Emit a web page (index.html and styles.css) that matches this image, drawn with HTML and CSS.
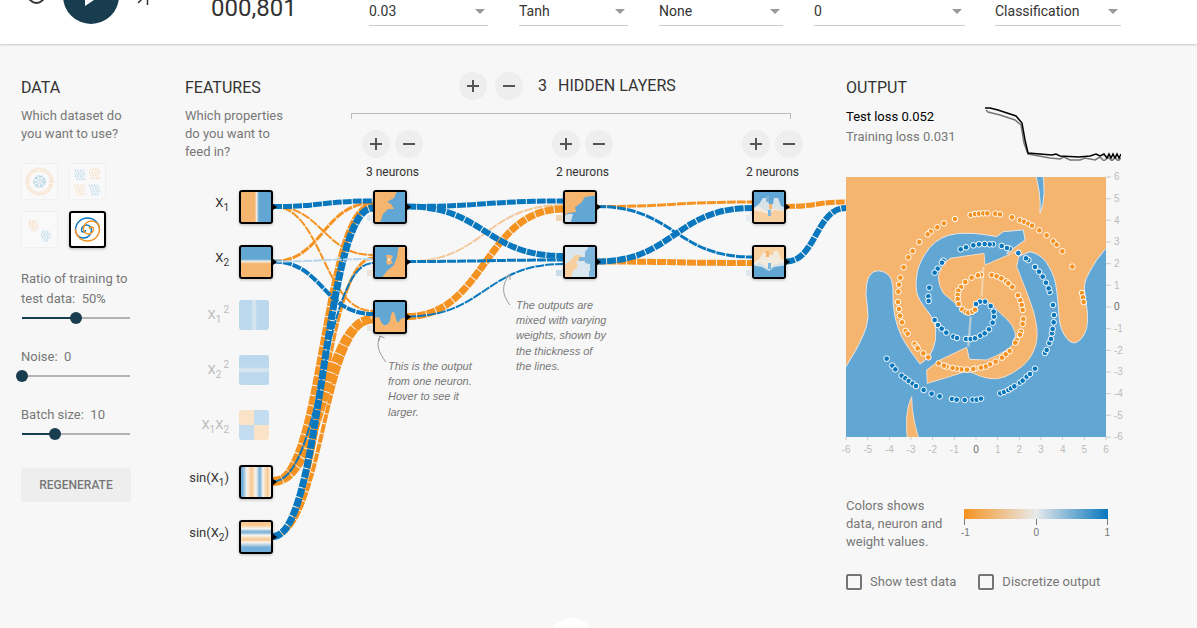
FILE: index.html
```html
<!DOCTYPE html>
<html lang="en">
<head>
<meta charset="utf-8">
<title>Neural network playground</title>
<link rel="stylesheet" href="styles.css">
</head>
<body>
<header class="topbar">
  <svg class="transport" viewBox="0 0 160 25" aria-hidden="true">
    <circle class="reset-ring" cx="36.500" cy="-5" r="8"/>
    <circle class="play-disc" cx="91" cy="-4" r="28"/>
    <polygon class="play-tri" points="85,-14 85,6 100,-4"/>
    <path class="step-mark" d="M138 3 L142 -1 M147.500 0 V5"/>
  </svg>
  <div class="counter">000,801</div>
  <div class="selects">
    <div class="select s-rate"><span>0.03</span><i class="caret"></i></div>
    <div class="select s-act"><span>Tanh</span><i class="caret"></i></div>
    <div class="select s-reg"><span>None</span><i class="caret"></i></div>
    <div class="select s-regrate"><span>0</span><i class="caret"></i></div>
    <div class="select s-prob"><span>Classification</span><i class="caret"></i></div>
  </div>
</header>

<main class="main">
  <section class="data">
    <h4>DATA</h4>
    <p class="hint">Which dataset do<br>you want to use?</p>
    <div class="datasets">
      <div class="dataset faded">
        <svg viewBox="0 0 37 37"><circle class="dot-o" cx="18.500" cy="18.500" r="12" stroke-width="3"/><circle class="dot-o" cx="18.500" cy="18.500" r="14" stroke-width="2"/><circle class="dot-b" cx="18.500" cy="18.500" r="3" stroke-width="6"/><circle class="dot-b" cx="18.500" cy="18.500" r="6" stroke-width="2"/></svg>
      </div>
      <div class="dataset faded">
        <svg viewBox="0 0 37 37"><path class="dot-b" d="M5 7H16M6 10H17M5 13H15M7 16H17M20 23H31M21 26H32M22 29H33M23 32H31" stroke-width="2.500"/><path class="dot-o" d="M21 6H32M20 9H33M21 12H31M22 15H33M5 23H16M6 26H17M6 29H15M8 32H17" stroke-width="2.500"/></svg>
      </div>
      <div class="dataset faded">
        <svg viewBox="0 0 37 37"><path class="dot-o" d="M8 10H16M7 13H18M8 16H17M10 19H16" stroke-width="3"/><path class="dot-b" d="M21 21H29M20 24H31M21 27H30M23 30H28" stroke-width="3"/></svg>
      </div>
      <div class="dataset selected">
        <svg viewBox="0 0 33 33"><path class="spiral-b" d="M14.500 17A2 2 0 0 1 10.500 17A5 5 0 0 1 20.500 17A8 8 0 0 1 4.500 17A12 12 0 0 1 28.500 17"/><path class="spiral-o" d="M18.500 16A2 2 0 0 1 22.500 16A5 5 0 0 1 12.500 16A8 8 0 0 1 28.500 16A12 12 0 0 1 4.500 16"/></svg>
      </div>
    </div>
    <div class="control first">
      <label>Ratio of training to<br>test data:&nbsp; 50%</label>
      <div class="slider"><span class="fill fill-ratio"></span><span class="thumb thumb-ratio"></span></div>
    </div>
    <div class="control">
      <label>Noise:&nbsp; 0</label>
      <div class="slider"><span class="thumb thumb-noise"></span></div>
    </div>
    <div class="control">
      <label>Batch size:&nbsp; 10</label>
      <div class="slider"><span class="fill fill-batch"></span><span class="thumb thumb-batch"></span></div>
    </div>
    <button class="regen">REGENERATE</button>
  </section>

  <section class="network">
    <div class="net-head">
      <div class="features-col">
        <h4>FEATURES</h4>
        <p class="hint">Which properties<br>do you want to<br>feed in?</p>
      </div>
      <div class="layers-col">
        <div class="layers-ctrl">
          <button class="round"><svg viewBox="0 0 14 14"><path d="M1 7H13M7 1V13"/></svg></button>
          <button class="round"><svg viewBox="0 0 14 14"><path d="M1 7H13"/></svg></button>
          <span class="layer-count">3</span>
          <span class="layer-title">HIDDEN LAYERS</span>
        </div>
        <div class="bracket"></div>
        <div class="layer-heads">
          <div class="layer-head">
            <div class="pair"><button class="round"><svg viewBox="0 0 14 14"><path d="M1 7H13M7 1V13"/></svg></button><button class="round"><svg viewBox="0 0 14 14"><path d="M1 7H13"/></svg></button></div>
            <div class="neurons">3 neurons</div>
          </div>
          <div class="layer-head">
            <div class="pair"><button class="round"><svg viewBox="0 0 14 14"><path d="M1 7H13M7 1V13"/></svg></button><button class="round"><svg viewBox="0 0 14 14"><path d="M1 7H13"/></svg></button></div>
            <div class="neurons">2 neurons</div>
          </div>
          <div class="layer-head">
            <div class="pair"><button class="round"><svg viewBox="0 0 14 14"><path d="M1 7H13M7 1V13"/></svg></button><button class="round"><svg viewBox="0 0 14 14"><path d="M1 7H13"/></svg></button></div>
            <div class="neurons">2 neurons</div>
          </div>
        </div>
      </div>
    </div>

    <div class="canvas">
      <svg class="links" viewBox="185 180 661 400" aria-hidden="true">
        <g class="l-o">
          <path class="w2" d="M273 206.500C323 206.500 323 255 373 255"/>
          <path class="w2" d="M273 206.500C323 206.500 323 311 373 311"/>
          <path class="w3" d="M273 261.500C323 261.500 323 203 373 203"/>
          <path class="w3" d="M273 536.500C323 536.500 323 258 373 258"/>
          <path class="w6" d="M273 481.500C323 481.500 323 205 373 205"/>
          <path class="w9" d="M273 481.500C323 481.500 323 319 373 319"/>
          <path class="w4" d="M273 536.500C323 536.500 323 321 373 321"/>
        </g>
        <g class="l-b">
          <path class="w5" d="M273 206.500C323 206.500 323 201 373 201"/>
          <path class="w4" d="M273 261.500C323 261.500 323 314 373 314"/>
          <path class="w2" d="M273 481.500C323 481.500 323 263 373 263"/>
          <path class="w7" d="M273 536.500C323 536.500 323 208 373 208"/>
        </g>
        <path class="l-pale-b w2" d="M273 261.500C323 261.500 323 259 373 259"/>

        <path class="l-pale-o w2" d="M407 261.500C485 261.500 485 205 563 205"/>
        <g class="l-o"><path class="w7" d="M407 316.500C485 316.500 485 209 563 209"/></g>
        <g class="l-b">
          <path class="w5" d="M407 206.500C485 206.500 485 201 563 201"/>
          <path class="w6" d="M407 206.500C485 206.500 485 256 563 256"/>
          <path class="w3" d="M407 261.500C485 261.500 485 260 563 260"/>
          <path class="w2" d="M407 316.500C485 316.500 485 264 563 264"/>
        </g>

        <g class="l-o">
          <path class="w3" d="M597 206.500C674.500 206.500 674.500 202 752 202"/>
          <path class="w6" d="M597 261.500C674.500 261.500 674.500 263 752 263"/>
        </g>
        <g class="l-b">
          <path class="w6" d="M597 261.500C674.500 261.500 674.500 208 752 208"/>
          <path class="w3" d="M597 206.500C674.500 206.500 674.500 257 752 257"/>
        </g>

        <g class="l-o"><path class="w5" d="M786 206.500C816 206.500 816 202 846 202"/></g>
        <g class="l-b"><path class="w6" d="M786 261.500C816 261.500 816 208 846 208"/></g>

        <path class="note-line" d="M386 362C378 352 376 344 380 336M379 341L380 336L384.500 338"/>
        <path class="note-line" d="M510 305C502 295 501 284 510 275M505 277L510 275L510 280"/>
      </svg>

      <div class="feature f1"><div class="f-label">X<sub>1</sub></div><div class="node g-x1"></div></div>
      <div class="feature f2"><div class="f-label">X<sub>2</sub></div><div class="node g-x2"></div></div>
      <div class="feature off f3"><div class="f-label">X<sub>1</sub><sup>2</sup></div><div class="node g-x1s"></div></div>
      <div class="feature off f4"><div class="f-label">X<sub>2</sub><sup>2</sup></div><div class="node g-x2s"></div></div>
      <div class="feature off f5"><div class="f-label">X<sub>1</sub>X<sub>2</sub></div><div class="node g-xx"></div></div>
      <div class="feature f6"><div class="f-label">sin(X<sub>1</sub>)</div><div class="node g-s1"></div></div>
      <div class="feature f7"><div class="f-label">sin(X<sub>2</sub>)</div><div class="node g-s2"></div></div>

      <div class="node neuron c1 r1"><svg viewBox="0 0 30 30"><rect class="hb" x="-3" y="-3" width="36" height="36"/><path class="ho" d="M-3 -3H23L19 6L12 10L16 12L19 17L13 17L8 22L7 25L4 33H-3Z"/></svg></div>
      <div class="node neuron c1 r2"><svg viewBox="0 0 30 30"><rect class="hb" x="-3" y="-3" width="36" height="36"/><path class="ho" d="M24 -3H33V33H5L12 24L19 18L22 10Z"/><path class="ho" d="M11 8H16L18 10L16 13L18 16L13 18L11 15L12 12Z"/><path class="hw" d="M13 11H15V14H13Z"/></svg></div>
      <div class="node neuron c1 r3"><svg viewBox="0 0 30 30"><rect class="hb" x="-3" y="-3" width="36" height="36"/><path class="ho" d="M-3 33V19Q3 12 5 17Q7 24 11 23Q15 22 16 13Q18 6 20 13Q22 22 24 20Q26 14 33 17V33Z"/></svg></div>

      <div class="node neuron c2 r1"><svg viewBox="0 0 30 30"><rect class="ho" x="-3" y="-3" width="36" height="36"/><path class="hb" d="M33 3L20 5L16 11L10 15L11 20L3 21L-3 25V33H33Z"/><path class="hw" d="M-3 25L3 22H8L5 33H-3Z"/></svg></div>
      <div class="node neuron c2 r2"><svg viewBox="0 0 30 30"><rect class="hp" x="-3" y="-3" width="36" height="36"/><path class="hlo" d="M-3 33V20L6 13L10 8H16L18 14H11L13 20L8 24L5 33Z"/><path class="hb2" d="M14 10H20V5L26 -3H33V33H24V24H25V17L20 16V14H14Z"/></svg></div>

      <div class="node neuron c3 r1"><svg viewBox="0 0 30 30"><rect class="hb" x="-3" y="-3" width="36" height="36"/><path class="hlo" d="M-3 33V18L5 14L10 18L15 20L20 16L33 20V33Z"/><path class="hw" d="M-3 18L5 12L9 6H13L15 12H19L20 6H24L27 14L33 16V20L20 18L15 22L8 20Z"/><path class="hb2" d="M12 4H15V10H12ZM14 18H17V24H14Z"/><path class="ho" d="M15 12H18V17H15Z"/></svg></div>
      <div class="node neuron c3 r2"><svg viewBox="0 0 30 30"><rect class="hlo" x="-3" y="-3" width="36" height="36"/><path class="hb" d="M-3 33V18L5 16L10 18L15 22L20 18L33 14V33Z"/><path class="hw" d="M-3 18L5 12L9 6H13L15 8H19L20 4H24L27 12L33 14V18L20 20L15 24L8 20Z"/><path class="ho" d="M12 4H15V10H12Z"/><path class="hb2" d="M14 16H17V22H14Z"/></svg></div>

      <span class="wsq q1"></span><span class="wsq q2"></span><span class="wsq q3"></span>
      <span class="wsq q4"></span><span class="wsq q5"></span>
      <span class="wsq q6"></span><span class="wsq q7"></span>

      <p class="note note-a">This is the output<br>from one neuron.<br>Hover to see it<br>larger.</p>
      <p class="note note-b">The outputs are<br>mixed with varying<br>weights, shown by<br>the thickness of<br>the lines.</p>
    </div>
  </section>

  <section class="output">
    <h4>OUTPUT</h4>
    <div class="loss-row">
      <div class="stats">
        <div class="stat-test">Test loss 0.052</div>
        <div class="stat-train">Training loss 0.031</div>
      </div>
      <svg class="loss" viewBox="985 107 136 54" aria-hidden="true">
        <path class="loss-train" d="M986 110L988 112L1000 115L1015 120L1021 125L1024 143L1028 154L1050 158L1060 159L1064 157L1070 160L1080 160L1085 158L1095 160L1100 157L1104 161L1108 157L1112 161L1115 157L1118 161L1121 158"/>
        <path class="loss-test" d="M985 108L990 108L998 110L1016 116L1022 123L1025 140L1028 153L1052 155L1056 154L1060 156L1079 157L1090 156L1096 154L1100 156L1104 154L1107 158L1109 154L1111 158L1113 154L1115 158L1117 154L1119 158L1121 154"/>
      </svg>
    </div>
    <svg class="plot" viewBox="846 170 285 290">
      <g transform="translate(840 170) scale(.33333)">
        <svg x="18" y="21" width="780" height="780" viewBox="18 21 780 780">
          <g class="heat">
            <rect class="hm-o" x="-20" y="-20" width="860" height="860"/>
            <path class="hm-b" d="M-20 650L18 590L45 545Q70 500 79 470Q88 440 81.500 405Q75 370 80 342Q85 315 100 306Q115 298 132 306Q150 315 155 332Q160 350 159 375Q158 400 164 435Q170 470 185 500Q200 530 240 582Q268 565 279 537Q290 510 287 480Q285 450 260 420Q235 390 230 365Q225 340 232 305Q240 270 270 232Q300 197 350 191Q400 186 470 200L490 185L550 180L555 210L500 250L530 262L570 245Q610 255 627 290Q645 320 650 360Q655 400 657 440Q660 480 680 505Q700 530 720 510Q740 490 742 460Q745 430 737 390Q730 350 737 330Q745 310 770 270L798 235L840 190V840H-20Z"/>
            <path class="hm-o" d="M330 265L432 250L435 285L540 240L530 290Q550 340 567 385Q585 430 590 470Q595 510 582 540Q570 570 545 590Q520 610 495 620Q470 630 445 625Q420 620 400 610Q380 600 345 615L262 640L260 600L300 570L380 532L388 568L440 570Q500 545 515 527Q530 510 525 487Q520 465 500 447Q480 430 465 412Q450 395 430 390Q410 385 395 432L370 420L310 370Q295 345 295 320Q300 290 330 265Z"/>
            <path class="hm-b" d="M580 -10Q605 70 600 130Q622 80 605 -10Z"/>
            <path class="hm-o" d="M215 680Q190 730 205 830H245Q215 750 215 680Z"/>
            <path class="hm-seam" d="M430 290L425 380M392 440L385 530"/>
          </g>
        </svg>
        <g class="pts-o">
          <circle cx="345" cy="147"/><circle cx="312" cy="160"/><circle cx="292" cy="172"/><circle cx="272" cy="185"/><circle cx="263" cy="193"/><circle cx="238" cy="216"/><circle cx="218" cy="243"/><circle cx="205" cy="262"/><circle cx="191" cy="292"/><circle cx="181" cy="323"/><circle cx="177" cy="344"/><circle cx="175" cy="365"/><circle cx="174" cy="396"/><circle cx="177" cy="417"/><circle cx="180" cy="437"/><circle cx="186" cy="457"/><circle cx="197" cy="483"/><circle cx="203" cy="491"/><circle cx="224" cy="522"/><circle cx="230" cy="530"/><circle cx="233" cy="535"/><circle cx="250" cy="550"/><circle cx="265" cy="562"/>
          <circle cx="392" cy="135"/><circle cx="405" cy="132"/><circle cx="417" cy="131"/><circle cx="430" cy="130"/><circle cx="442" cy="130"/><circle cx="466" cy="131"/><circle cx="480" cy="133"/><circle cx="516" cy="142"/><circle cx="540" cy="151"/><circle cx="552" cy="155"/><circle cx="565" cy="161"/><circle cx="576" cy="167"/><circle cx="598" cy="181"/><circle cx="620" cy="196"/><circle cx="640" cy="214"/><circle cx="650" cy="224"/><circle cx="667" cy="244"/><circle cx="697" cy="290"/><circle cx="726" cy="369"/><circle cx="729" cy="382"/><circle cx="731" cy="396"/>
          <circle cx="423" cy="314"/><circle cx="414" cy="316"/><circle cx="395" cy="323"/><circle cx="376" cy="336"/><circle cx="363" cy="351"/><circle cx="355" cy="362"/><circle cx="353" cy="375"/><circle cx="353" cy="387"/><circle cx="356" cy="402"/><circle cx="367" cy="418"/><circle cx="377" cy="425"/><circle cx="385" cy="428"/><circle cx="397" cy="425"/><circle cx="405" cy="419"/>
          <circle cx="455" cy="315"/><circle cx="470" cy="319"/><circle cx="484" cy="325"/><circle cx="498" cy="334"/><circle cx="505" cy="340"/><circle cx="517" cy="351"/><circle cx="534" cy="376"/><circle cx="541" cy="391"/><circle cx="545" cy="405"/><circle cx="548" cy="420"/><circle cx="550" cy="447"/><circle cx="548" cy="462"/><circle cx="543" cy="485"/><circle cx="540" cy="494"/><circle cx="530" cy="510"/><circle cx="526" cy="518"/><circle cx="509" cy="543"/><circle cx="497" cy="553"/><circle cx="486" cy="563"/><circle cx="467" cy="575"/><circle cx="450" cy="583"/><circle cx="437" cy="590"/><circle cx="423" cy="593"/><circle cx="406" cy="596"/><circle cx="400" cy="597"/><circle cx="381" cy="599"/><circle cx="364" cy="598"/><circle cx="350" cy="596"/><circle cx="338" cy="594"/><circle cx="320" cy="590"/><circle cx="312" cy="587"/><circle cx="296" cy="580"/>
        </g>
        <g class="pts-b">
          <circle cx="140" cy="566"/><circle cx="157" cy="587"/><circle cx="166" cy="598"/><circle cx="185" cy="617"/><circle cx="196" cy="625"/><circle cx="206" cy="633"/><circle cx="218" cy="641"/><circle cx="228" cy="648"/><circle cx="251" cy="660"/><circle cx="275" cy="671"/><circle cx="299" cy="679"/><circle cx="336" cy="687"/><circle cx="350" cy="689"/><circle cx="374" cy="690"/><circle cx="398" cy="689"/><circle cx="410" cy="689"/><circle cx="423" cy="686"/>
          <circle cx="481" cy="670"/><circle cx="492" cy="666"/><circle cx="505" cy="660"/><circle cx="513" cy="655"/><circle cx="523" cy="649"/><circle cx="540" cy="638"/><circle cx="548" cy="632"/><circle cx="560" cy="620"/><circle cx="570" cy="612"/><circle cx="585" cy="596"/>
          <circle cx="615" cy="549"/><circle cx="620" cy="540"/><circle cx="628" cy="519"/><circle cx="633" cy="507"/><circle cx="636" cy="490"/><circle cx="638" cy="477"/><circle cx="641" cy="457"/><circle cx="642" cy="435"/><circle cx="639" cy="405"/><circle cx="629" cy="366"/><circle cx="626" cy="355"/><circle cx="618" cy="338"/><circle cx="608" cy="320"/><circle cx="597" cy="305"/><circle cx="585" cy="291"/><circle cx="565" cy="270"/><circle cx="558" cy="265"/><circle cx="535" cy="249"/><circle cx="509" cy="236"/><circle cx="501" cy="234"/><circle cx="485" cy="228"/><circle cx="459" cy="223"/><circle cx="449" cy="223"/><circle cx="434" cy="222"/><circle cx="417" cy="223"/><circle cx="400" cy="226"/><circle cx="378" cy="232"/><circle cx="362" cy="238"/><circle cx="310" cy="272"/><circle cx="306" cy="278"/><circle cx="293" cy="296"/><circle cx="284" cy="308"/><circle cx="268" cy="353"/><circle cx="265" cy="379"/><circle cx="266" cy="393"/>
          <circle cx="284" cy="450"/><circle cx="294" cy="465"/><circle cx="305" cy="476"/><circle cx="319" cy="488"/><circle cx="340" cy="500"/><circle cx="351" cy="504"/><circle cx="378" cy="507"/><circle cx="392" cy="507"/><circle cx="405" cy="505"/><circle cx="421" cy="497"/><circle cx="434" cy="490"/><circle cx="447" cy="478"/><circle cx="458" cy="458"/><circle cx="462" cy="440"/><circle cx="461" cy="425"/><circle cx="452" cy="408"/><circle cx="435" cy="395"/><circle cx="420" cy="395"/><circle cx="408" cy="402"/>
        </g>
      </g>
      <path class="ticks" d="M1106 177h5M1106 198.700h5M1106 220.300h5M1106 242h5M1106 263.700h5M1106 285.300h5M1106 307h5M1106 328.700h5M1106 350.300h5M1106 372h5M1106 393.700h5M1106 415.300h5M1106 437h5M846 437v3M867.700 437v3M889.300 437v3M911 437v3M932.700 437v3M954.300 437v3M976 437v3M997.700 437v3M1019.300 437v3M1041 437v3M1062.700 437v3M1084.300 437v3M1106 437v3"/>
      <g class="yt">
        <text x="1114" y="180">6</text><text x="1114" y="202">5</text><text x="1114" y="224">4</text><text x="1114" y="245">3</text><text x="1114" y="267">2</text><text x="1114" y="289">1</text><text class="zero" x="1114" y="310">0</text><text x="1114" y="332">-1</text><text x="1114" y="354">-2</text><text x="1114" y="375">-3</text><text x="1114" y="397">-4</text><text x="1114" y="419">-5</text><text x="1114" y="440">-6</text>
      </g>
      <g class="xt">
        <text x="846" y="453">-6</text><text x="867.700" y="453">-5</text><text x="889.300" y="453">-4</text><text x="911" y="453">-3</text><text x="932.700" y="453">-2</text><text x="954.300" y="453">-1</text><text class="zero" x="976" y="453">0</text><text x="997.700" y="453">1</text><text x="1019.300" y="453">2</text><text x="1041" y="453">3</text><text x="1062.700" y="453">4</text><text x="1084.300" y="453">5</text><text x="1106" y="453">6</text>
      </g>
    </svg>
    <div class="legend">
      <p class="legend-text">Colors shows<br>data, neuron and<br>weight values.</p>
      <div class="scale">
        <div class="scale-bar"></div>
        <div class="scale-ticks"><span>-1</span><span>0</span><span>1</span></div>
      </div>
    </div>
    <div class="checks">
      <div class="check"><i class="box"></i>Show test data</div>
      <div class="check"><i class="box"></i>Discretize output</div>
    </div>
  </section>
</main>
<div class="more"></div>
</body>
</html>
```

FILE: styles.css
```css
* { box-sizing: border-box; }
html, body { margin: 0; height: 628px; overflow: hidden; }
body { background: #f7f7f7; font-family: Roboto, "Helvetica Neue", sans-serif; color: #333; position: relative; }

/* top bar */
.topbar { height: 44px; background: #fff; display: flex; align-items: flex-start; box-shadow: 0 1px 2px rgba(0,0,0,.2); overflow: hidden; position: relative; }
.transport { width: 160px; height: 25px; flex: none; }
.reset-ring { fill: none; stroke: #333; stroke-width: 2; }
.play-disc { fill: #183d4e; }
.play-tri { fill: #fff; }
.step-mark { fill: none; stroke: #333; stroke-width: 1.500; }
.counter { margin-left: 51px; width: 158px; font-size: 24px; line-height: 16px; color: #333; flex: none; }
.selects { display: flex; gap: 31px; }
.select { height: 26px; border-bottom: 1px solid #ccc; display: flex; justify-content: space-between; align-items: center; padding-right: 3px; font-size: 14px; color: #333; padding-bottom: 4px; }
.s-rate { width: 119px; }
.s-act { width: 109px; }
.s-reg { width: 124px; }
.s-regrate { width: 151px; }
.s-prob { width: 126px; margin-left: -1px; }
.caret { width: 0; height: 0; border-left: 5px solid transparent; border-right: 5px solid transparent; border-top: 5px solid #999; margin-top: 2px; }

/* layout */
.main { display: flex; padding-left: 21px; }
h4 { margin: 0; padding-top: 1px; font-size: 16px; font-weight: 400; line-height: 20px; color: #333; }
.hint { margin: 9px 0 0; font-size: 13px; line-height: 18px; color: #777; }

/* data */
.data { width: 164px; flex: none; padding-top: 33px; }
.datasets { display: grid; grid-template-columns: 37px 37px; grid-auto-rows: 37px; gap: 11px; margin-top: 20px; }
.dataset { border-radius: 3px; }
.dataset svg { display: block; width: 100%; height: 100%; }
.dataset.faded { border: 1px solid #f0f0f0; background: #f9f9f9; }
.dataset.selected { border: 2px solid #000; background: #fff; box-shadow: 0 1px 3px rgba(0,0,0,.25); }
.dot-o, .dot-b { fill: none; stroke-dasharray: 1.500 1.200; opacity: .2; }
.dot-o { stroke: #f59322; }
.dot-b { stroke: #0877bd; }
.spiral-b, .spiral-o { fill: none; stroke-width: 1.400; }
.spiral-b { stroke: #0877bd; }
.spiral-o { stroke: #f59322; }

.control { margin-top: 19px; width: 110px; }
.control.first { margin-top: 20px; }
.control label { display: block; padding-top: 1px; font-size: 13px; line-height: 20px; color: #777; white-space: nowrap; }
.slider { position: relative; height: 18px; width: 108px; margin-left: 1px; }
.slider::before { content: ""; position: absolute; left: 0; right: 0; top: 8px; height: 2px; background: #b3b3b3; }
.fill { position: absolute; left: 0; top: 8px; height: 2px; background: #183d4e; }
.fill-ratio { width: 54px; }
.fill-batch { width: 33px; }
.thumb { position: absolute; top: 3px; width: 12px; height: 12px; border-radius: 50%; background: #183d4e; }
.thumb-ratio { left: 48px; }
.thumb-noise { left: -6px; }
.thumb-batch { left: 27px; }
.regen { display: block; margin-top: 25px; width: 110px; height: 34px; border: 0; border-radius: 3px; background: #eee; color: #777; font: 500 12px Roboto, sans-serif; padding: 0; }

/* network */
.network { width: 661px; flex: none; }
.net-head { display: flex; height: 136px; }
.features-col { width: 166px; flex: none; padding-top: 33px; }
.layers-col { width: 495px; padding-top: 28px; }
.layers-ctrl { display: flex; align-items: center; height: 28px; padding-left: 108px; gap: 8px; }
.round { width: 28px; height: 28px; border: 0; padding: 0; border-radius: 50%; background: #eee; display: flex; align-items: center; justify-content: center; }
.round svg { width: 14px; height: 14px; }
.round path { fill: none; stroke: #555; stroke-width: 2; }
.layer-count { font-size: 16px; margin-left: 7px; margin-bottom: 2px; color: #333; }
.layer-title { font-size: 16px; margin-left: 3px; margin-bottom: 2px; color: #333; }
.bracket { margin-top: 13px; width: 440px; height: 6px; border: 1px solid #bbb; border-bottom: 0; }
.layer-heads { display: flex; gap: 129px; margin-top: 11px; padding-left: 11px; }
.layer-head { width: 61px; flex: none; }
.pair { display: flex; gap: 5px; }
.neurons { margin-top: 7px; font-size: 12px; line-height: 14px; color: #333; text-align: center; white-space: nowrap; }

.canvas { position: relative; height: 400px; }
.links { position: absolute; left: 0; top: 0; width: 661px; height: 400px; overflow: visible; }
.links path { fill: none; stroke-dasharray: 9 1; }
.l-o path { stroke: #f59322; }
.l-b path { stroke: #0877bd; }
.links .l-pale-b { stroke: #b9d6ea; }
.links .l-pale-o { stroke: #f3c898; }
.links .w2 { stroke-width: 2; }
.links .w3 { stroke-width: 3; }
.links .w4 { stroke-width: 4; }
.links .w5 { stroke-width: 5; }
.links .w6 { stroke-width: 6; }
.links .w7 { stroke-width: 7; }
.links .w9 { stroke-width: 9; }
.links .note-line { stroke: #999; stroke-width: 1; stroke-dasharray: none; }

.feature { position: absolute; left: 0; width: 88px; display: flex; align-items: center; }
.f1 { top: 10px; } .f2 { top: 65px; } .f3 { top: 120px; } .f4 { top: 175px; }
.f5 { top: 230px; } .f6 { top: 285px; } .f7 { top: 340px; }
.f-label { width: 44px; flex: none; margin-right: 10px; margin-bottom: 9px; text-align: right; font-size: 13px; color: #333; white-space: nowrap; }
.f-label sub, .f-label sup { font-size: 10px; line-height: 0; }
.f-label sup { margin-left: 2px; }
.feature.off .f-label { color: #bbb; margin-bottom: 2px; }
.node { width: 34px; height: 34px; border: 2px solid #000; border-radius: 3px; flex: none; position: relative; box-shadow: 0 1px 3px rgba(0,0,0,.25); }
.node::after { content: ""; position: absolute; right: -6px; top: 12px; width: 0; height: 0; border-left: 4px solid #000; border-top: 3px solid transparent; border-bottom: 3px solid transparent; }
.feature.off .node { width: 30px; height: 30px; border: 0; box-shadow: none; }
.feature.off .node::after { display: none; }
.g-x1 { background: linear-gradient(90deg, #f5b56f 46%, #f2ede5 52%, #62a6d4 60%); }
.g-x2 { background: linear-gradient(180deg, #62a6d4 40%, #f2ede5 48%, #f5b56f 56%); }
.g-x1s { background: linear-gradient(90deg, #bcd8ed 40%, #d6e5ef 47%, #d6e5ef 54%, #bcd8ed 60%); }
.g-x2s { background: linear-gradient(180deg, #bcd8ed 40%, #d6e5ef 47%, #d6e5ef 54%, #bcd8ed 60%); }
.g-xx { background: conic-gradient(#c3dcef 25%, #fbe3c8 25% 50%, #c3dcef 50% 75%, #fbe3c8 75%); }
.g-s1 { background: linear-gradient(90deg, #72aed9 5%, #f7f3ee 20%, #f8c88f 35%, #f7f3ee 50%, #72aed9 63%, #f7f3ee 73%, #f8c88f 88%, #f7f3ee 100%); }
.g-s2 { background: linear-gradient(180deg, #f8c88f 10%, #f7f3ee 22%, #72aed9 33%, #f7f3ee 45%, #f8c88f 58%, #f7f3ee 68%, #72aed9 85%); }

.neuron { position: absolute; }
.neuron svg { display: block; width: 30px; height: 30px; border-radius: 1px; }
.neuron svg > * { filter: blur(.6px); }
.c1 { left: 188px; } .c2 { left: 378px; } .c3 { left: 567px; }
.r1 { top: 10px; } .r2 { top: 65px; } .r3 { top: 120px; }
.hb { fill: #62a6d4; }
.ho { fill: #f5b56f; }
.hw { fill: #f3f1ee; opacity: .8; }
.hp { fill: #dbe7ef; }
.hlo { fill: #f8cf9e; }
.hb2 { fill: #7db5dc; }

.wsq { position: absolute; width: 6px; height: 6px; }
.q1 { left: 182px; top: 35px; background: #dde8ef; }
.q2 { left: 182px; top: 90px; background: #ebe3db; }
.q3 { left: 182px; top: 145px; background: #e6e6e6; }
.q4 { left: 371px; top: 35px; background: #ecd4b4; }
.q5 { left: 371px; top: 90px; background: #c9dcea; }
.q6 { left: 561px; top: 35px; background: #e8ecf0; }
.q7 { left: 561px; top: 90px; background: #dfe6ed; }

.note { position: absolute; margin: 0; font: italic 11px/15.200px "Liberation Sans", sans-serif; color: #777; white-space: nowrap; }
.note-a { left: 203px; top: 179px; }
.note-b { left: 331px; top: 118px; }

/* output */
.output { width: 290px; flex: none; padding-top: 33px; }
.loss-row { display: flex; margin-top: 9px; height: 54px; }
.stats { width: 139px; flex: none; font-size: 13px; line-height: 20px; white-space: nowrap; }
.stat-test { color: #000; }
.stat-train { color: #777; }
.loss { width: 136px; height: 54px; flex: none; }
.loss path { fill: none; stroke-width: 1.500; }
.loss-test { stroke: #000; }
.loss-train { stroke: #777; }
.plot { display: block; width: 285px; height: 290px; margin-top: 9px; overflow: visible; }
.heat { filter: blur(1.500px); }
.hm-o { fill: #f5b56f; stroke: #f1dcc5; stroke-width: 3; stroke-linejoin: round; }
rect.hm-o { stroke: none; }
.hm-b { fill: #62a6d4; stroke: #dfe6ec; stroke-width: 3; stroke-linejoin: round; }
.hm-seam { fill: none; stroke: #f3ead9; stroke-width: 7; opacity: .55; }
.pts-o circle, .pts-b circle { r: 8.500px; stroke: #fff; stroke-width: 3; }
.pts-o circle { fill: #f59322; }
.pts-b circle { fill: #0877bd; }
.ticks { stroke: #ccc; stroke-width: 1; fill: none; }
.plot text { font: 10px "Liberation Sans", sans-serif; fill: #bbb; }
.plot text.zero { fill: #666; }
.xt text { text-anchor: middle; }

.legend { display: flex; margin-top: 36px; }
.legend-text { margin: 0; padding-top: 1px; width: 118px; font-size: 13px; line-height: 18px; color: #777; flex: none; }
.scale { width: 144px; margin-top: 13px; }
.scale-bar { height: 10px; background: linear-gradient(90deg, #f59322, #e8eaeb 50%, #0877bd); }
.scale-ticks { display: flex; justify-content: space-between; height: 6px; border-left: 1px solid #777; border-right: 1px solid #777; position: relative; font: 10px/10px "Liberation Sans", sans-serif; color: #777; }
.scale-ticks::before { content: ""; position: absolute; left: 71px; top: 0; height: 6px; border-left: 1px solid #777; }
.scale-ticks span { margin-top: 9px; margin-left: -4px; }
.scale-ticks span:last-child { margin-left: 0; margin-right: -3px; }
.scale-ticks span:nth-child(2) { margin-left: -2px; }
.checks { display: flex; margin-top: 23px; gap: 22px; }
.check { display: flex; align-items: center; gap: 8px; font-size: 13px; line-height: 16px; color: #777; white-space: nowrap; }
.box { display: block; width: 16px; height: 16px; border: 2px solid #757575; border-radius: 2px; }

.more { position: absolute; left: 548px; top: 618px; width: 47px; height: 10px; overflow: hidden; }
.more::before { content: ""; display: block; width: 47px; height: 47px; border-radius: 50%; background: #fff; }
```
